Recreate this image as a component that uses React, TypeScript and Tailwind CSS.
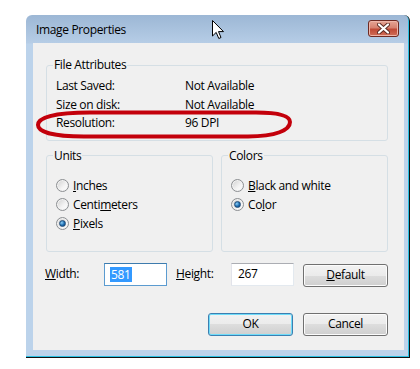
import React from "react";

const font = { fontFamily: '"Open Sans", "Noto Sans", sans-serif' };

const Radio = ({ checked, children }: { checked?: boolean; children: React.ReactNode }) => (
  <div className="flex items-center h-[19px] gap-[4px]">
    <span className="w-[13px] h-[13px] rounded-full border border-[#8c8f92] bg-[linear-gradient(135deg,#cfcfcf,#f4f4f4_60%,#ffffff)] flex items-center justify-center shadow-[inset_0_0_0_1px_#f2f2f2]">
      {checked && (
        <span className="w-[7px] h-[7px] rounded-full bg-[radial-gradient(circle_at_35%_35%,#8fd0f7,#1a6bb0_55%,#0b3f72)] border border-[#234d78]" />
      )}
    </span>
    <span>{children}</span>
  </div>
);

const Button = ({ children, focused }: { children: React.ReactNode; focused?: boolean }) => (
  <button
    className={
      "w-[85px] h-[23px] rounded-[3px] border text-black flex items-center justify-center bg-[linear-gradient(#f2f2f2_0%,#ebebeb_50%,#dddddd_50%,#cfcfcf_100%)] " +
      (focused
        ? "border-[#3c7fb1] shadow-[inset_0_0_0_1px_#6fdcf9]"
        : "border-[#707070] shadow-[inset_0_0_0_1px_#fcfcfc]")
    }
  >
    {children}
  </button>
);

const Group = ({ title, className, children }: { title: string; className: string; children: React.ReactNode }) => (
  <fieldset className={"border border-[#d5dfe5] rounded-[3px] pl-[9px] " + className}>
    <legend className="ml-[-3px] px-[1px] leading-[16px]">{title}</legend>
    {children}
  </fieldset>
);

export default function App() {
  return (
    <div className="w-[420px] h-[369px] bg-white pt-[15px] pl-[26px] relative text-[12px] tracking-[-0.35px] text-black overflow-hidden" style={font}>
      <div className="w-[384px] h-[343px] rounded-t-[6px] border-r border-b border-[#111] shadow-[inset_-1px_-1px_0_#29c0e2] bg-[linear-gradient(#9cb7d5_0px,#b6cde6_28px,#bcd3eb_29px,#bcd3eb_100%)] flex flex-col">
        <div className="h-[28px] flex items-center justify-between pl-[10px] pr-[10px]">
          <span className="leading-[16px] mt-[2px] text-black">Image Properties</span>
          <div className="w-[31px] h-[17px] mt-[-1px] rounded-[3px] border border-[#6e2a22] bg-[linear-gradient(#e6a595_0%,#d78270_45%,#c04a36_55%,#d06e58_100%)] shadow-[inset_0_0_0_1px_#eeb5a8] flex items-center justify-center">
            <svg width="13" height="11" viewBox="0 0 13 11">
              <path d="M2 1.5 L11 9.5 M11 1.5 L2 9.5" stroke="#5a2a22" strokeWidth="4" strokeLinecap="round" />
              <path d="M2 1.5 L11 9.5 M11 1.5 L2 9.5" stroke="#ffffff" strokeWidth="2.2" strokeLinecap="round" />
            </svg>
          </div>
        </div>

        <div className="ml-[7px] w-[371px] h-[307px] bg-[#f0f0f0] pl-[13px] pt-[14px]">
          <div className="w-[342px] flex flex-col">
            <Group title="File Attributes" className="pb-[7px]">
              <div className="pt-[4px] leading-[18px]">
                {[
                  ["Last Saved:", "Not Available"],
                  ["Size on disk:", "Not Available"],
                  ["Resolution:", "96 DPI"],
                ].map(([k, v]) => (
                  <div key={k} className="flex h-[18.5px]">
                    <span className="w-[129px]">{k}</span>
                    <span>{v}</span>
                  </div>
                ))}
              </div>
            </Group>

            <div className="flex gap-[8px] mt-[7px]">
              <Group title="Units" className="w-[167px] h-[104px]">
                <div className="pt-[12px] leading-[19px]">
                  <Radio><u>I</u>nches</Radio>
                  <Radio>Centi<u>m</u>eters</Radio>
                  <Radio checked><u>P</u>ixels</Radio>
                </div>
              </Group>
              <Group title="Colors" className="w-[167px] h-[104px]">
                <div className="pt-[12px] leading-[19px]">
                  <Radio><u>B</u>lack and white</Radio>
                  <Radio checked>Co<u>l</u>or</Radio>
                </div>
              </Group>
            </div>

            <div className="flex items-center mt-[11px] h-[23px]">
              <span className="w-[59px] ml-[-1px]"><u>W</u>idth:</span>
              <div className="w-[63px] h-[23px] border border-[#5b9bd0] border-t-[#3d7bad] bg-white flex items-center pl-[5px]">
                <span className="bg-[#3399ff] text-white leading-[15px] px-[1px]">581</span>
              </div>
              <span className="w-[55px] ml-[9px]"><u>H</u>eight:</span>
              <div className="w-[63px] h-[23px] border border-[#e3e9ef] border-t-[#abadb3] border-l-[#e2e3ea] bg-white flex items-center pl-[6px]">
                267
              </div>
              <div className="ml-[9px] mt-[2px]">
                <Button><u>D</u>efault</Button>
              </div>
            </div>

            <div className="flex justify-end gap-[10px] mt-[27px]">
              <Button focused>OK</Button>
              <Button>Cancel</Button>
            </div>
          </div>
        </div>
      </div>

      {/* red annotation */}
      <svg className="absolute left-[34px] top-[109px]" width="262" height="32" viewBox="0 0 262 32">
        <path
          d="M4 16 C4 8, 22 3.5, 56 3.5 L222 3.5 C246 3.5, 256 7, 256 13 C256 21, 242 27.5, 214 27.5 L50 27.5 C20 27.5, 4 23, 4 16 Z"
          fill="none"
          stroke="#c3000b"
          strokeWidth="4"
        />
      </svg>

      {/* mouse cursor */}
      <svg className="absolute left-[212px] top-[20px]" width="13" height="20" viewBox="0 0 13 20">
        <path d="M0.5 0.5 L0.5 16 L4.2 12.4 L6.8 18.5 L9 17.5 L6.5 11.6 L11.5 11.6 Z" fill="#fff" stroke="#000" strokeWidth="1" strokeLinejoin="round" />
      </svg>
    </div>
  );
}
